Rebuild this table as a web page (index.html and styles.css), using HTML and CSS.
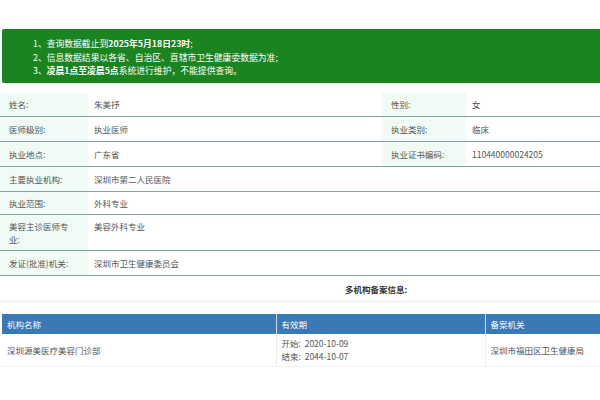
FILE: index.html
```html
<!DOCTYPE html>
<html lang="zh">
<head>
<meta charset="utf-8">
<link rel="stylesheet" href="styles.css">
</head>
<body>
<div class="notice">
  <div class="line">1、查询数据截止到<b>2025年5月18日23时</b>;</div>
  <div class="line">2、信息数据结果以各省、自治区、直辖市卫生健康委数据为准;</div>
  <div class="line">3、<b>凌晨1点至凌晨5点</b>系统进行维护，不能提供查询。</div>
</div>

<table class="info">
  <colgroup>
    <col class="c1"><col class="c2"><col class="c3"><col class="c4">
  </colgroup>
  <tr><td class="lab">姓名:</td><td>朱美抒</td><td class="lab">性别:</td><td>女</td></tr>
  <tr><td class="lab">医师级别:</td><td>执业医师</td><td class="lab">执业类别:</td><td>临床</td></tr>
  <tr><td class="lab">执业地点:</td><td>广东省</td><td class="lab">执业证书编码:</td><td>110440000024205</td></tr>
  <tr><td class="lab">主要执业机构:</td><td colspan="3">深圳市第二人民医院</td></tr>
  <tr class="short"><td class="lab">执业范围:</td><td colspan="3">外科专业</td></tr>
  <tr class="tall"><td class="lab">美容主诊医师专业:</td><td colspan="3">美容外科专业</td></tr>
  <tr><td class="lab">发证(批准)机关:</td><td colspan="3">深圳市卫生健康委员会</td></tr>
</table>

<div class="multi">多机构备案信息:</div>

<table class="orgs">
  <colgroup>
    <col class="o1"><col class="o2"><col class="o3">
  </colgroup>
  <thead>
    <tr><th>机构名称</th><th>有效期</th><th>备案机关</th></tr>
  </thead>
  <tbody>
    <tr>
      <td>深圳源美医疗美容门诊部</td>
      <td><div>开始:&nbsp;&nbsp;2020-10-09</div><div>结束:&nbsp;&nbsp;2044-10-07</div></td>
      <td>深圳市福田区卫生健康局</td>
    </tr>
  </tbody>
</table>
</body>
</html>
```

FILE: styles.css
```css
html, body {
  margin: 0;
  padding: 0;
  background: #ffffff;
  overflow: hidden;
}
body {
  width: 600px;
  font-family: "Noto Sans CJK SC", "Noto Sans", sans-serif;
  font-size: 8.5px;
  color: #555555;
}
.notice {
  margin: 29px 0 0 2px;
  height: 54px;
  box-sizing: border-box;
  padding: 8px 0 0 31px;
  background: #1a8420;
  border-radius: 2px 0 0 2px;
  color: #ffffff;
  font-size: 8.8px;
  line-height: 13.5px;
}
.notice b {
  font-weight: 700;
}
.info {
  margin-top: 10px;
  width: 600px;
  border-collapse: collapse;
  table-layout: fixed;
}
.c1 { width: 88px; }
.c2 { width: 294px; }
.c3 { width: 84px; }
.c4 { width: 134px; }
.info td {
  padding: 6px 12px 5px 6px;
  line-height: 13px;
  height: 13px;
  border-bottom: 1px solid #7ea898;
  vertical-align: top;
  color: #555555;
  word-break: break-all;
}
.info td.lab {
  background: #f0fbf5;
  padding-left: 9px;
}
.info tr:first-child td {
  padding-top: 5px;
}
.info tr.short td {
  padding-top: 5px;
  padding-bottom: 4px;
}
.info tr.tall td {
  padding-top: 5px;
  padding-bottom: 4px;
}
.multi {
  padding: 7px 0 0 345px;
  height: 18px;
  line-height: 12px;
  box-sizing: border-box;
  height: 26px;
  font-weight: 700;
  color: #333333;
  border-bottom: 1px solid #eeeeee;
}
.orgs {
  margin: 12px 0 0 2px;
  width: 598px;
  border-collapse: collapse;
  table-layout: fixed;
}
.o1 { width: 274px; }
.o2 { width: 209px; }
.o3 { width: 115px; }
.orgs th {
  background: #3a78b6;
  color: #ffffff;
  font-weight: 400;
  text-align: left;
  height: 20px;
  padding: 0 5px;
  line-height: 20px;
  border-left: 1px solid #c9dbee;
}
.orgs th:first-child {
  border-left: none;
}
.orgs td {
  padding: 3px 5px 3px 5px;
  height: 25px;
  line-height: 13px;
  color: #555555;
  border-left: 1px solid #eeeeee;
  border-bottom: 1px solid #f2f2f2;
}
.orgs td:first-child {
  border-left: none;
}
```
